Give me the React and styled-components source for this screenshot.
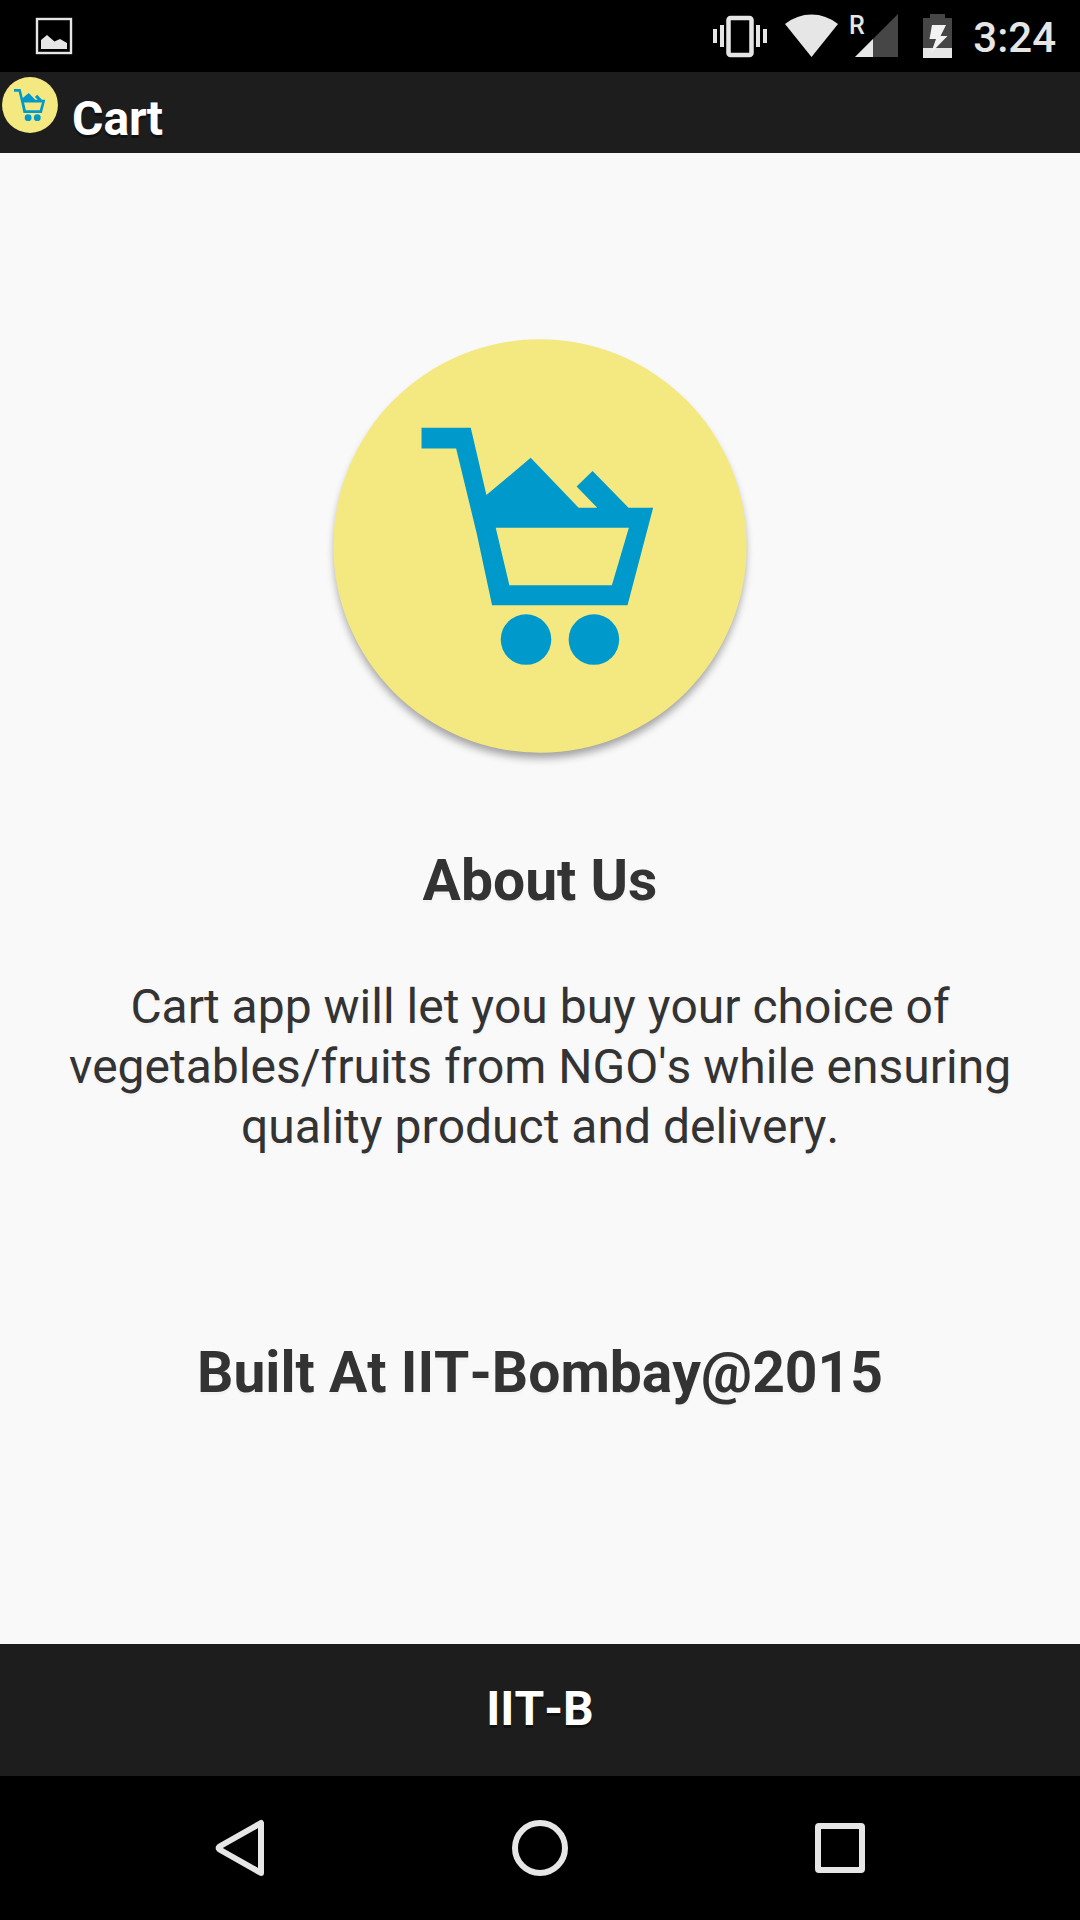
import React from "react";
import styled, { createGlobalStyle } from "styled-components";

const GlobalStyle = createGlobalStyle`
  *, *::before, *::after { box-sizing: border-box; }
  body {
    margin: 0;
    background: #f9f9f9;
    font-family: Roboto, "Noto Sans", sans-serif;
    font-kerning: none;
  }
  svg { display: block; overflow: visible; }
`;

const Screen = styled.div`
  display: flex;
  flex-direction: column;
  min-height: 100vh;
`;

const StatusBar = styled.div`
  display: flex;
  align-items: center;
  justify-content: space-between;
  height: 72px;
  padding: 0 24px 0 36px;
  background: #000;
  color: #e6e6e6;
`;

const StatusIcons = styled.div`
  display: flex;
  align-items: center;
`;

const StatusIcon = styled.svg`
  flex: none;
  width: ${(p) => p.$width}px;
  height: 44px;
  margin-right: ${(p) => p.$gap}px;
`;

const Clock = styled.time`
  font-size: 42px;
  line-height: 48px;
  font-weight: 500;
  padding-top: 4px;
`;

const Header = styled.header`
  display: flex;
  align-items: flex-start;
  gap: 14px;
  padding: 5px 2px 4px;
  background: #1d1d1d;
`;

const BarTitle = styled.h1`
  margin: 0;
  padding-top: ${(p) => p.$drop || 0}px;
  font-size: 48px;
  line-height: 60px;
  font-weight: 700;
  color: #fff;
  text-shadow: 0 3px 0 #111;
`;

const Content = styled.main`
  flex: 1;
  display: flex;
  flex-direction: column;
  align-items: center;
  padding: 186px 48px 48px;
  color: #333;
  text-align: center;
  text-shadow: 0 3px 0 #f3f3f3;
`;

const Heading = styled.h2`
  margin: ${(p) => p.$space}px 0 0;
  font-size: 57px;
  line-height: 70px;
  font-weight: 700;
`;

const Blurb = styled.p`
  margin: 61px 0 0;
  font-size: 48px;
  line-height: 60px;
`;

const Footer = styled.footer`
  display: flex;
  justify-content: center;
  padding: 35px 36px 37px;
  background: #1d1d1d;
`;

const NavBar = styled.nav`
  display: flex;
  justify-content: center;
  height: 144px;
  background: #000;
`;

const NavButton = styled.button`
  flex: 0 1 300px;
  display: flex;
  align-items: center;
  justify-content: center;
  padding: 0;
  border: 0;
  background: none;
  color: #e6e6e6;
  cursor: pointer;
`;

function CartLogo({ size, shadow }) {
  return (
    <svg width={size} height={size} viewBox="68 55 1244 1244" role="img" aria-label="Cart logo">
      {shadow && (
        <>
          <defs>
            <filter id="logo-shadow" x="-10%" y="-10%" width="120%" height="120%">
              <feGaussianBlur stdDeviation="13" />
            </filter>
          </defs>
          <circle cx="690" cy="697" r="617" fill="#000" opacity="0.36" filter="url(#logo-shadow)" />
        </>
      )}
      <circle cx="690" cy="677" r="621" fill="#f4e981" />
      <g fill="#0099cc">
        <path
          fillRule="evenodd"
          d="M334 322H482L529 524L662 412L806 562H862L800 498L848 452L956 562H1030L953 855H546L500 640L438 384H334ZM557 622L598 795H906L957 622Z"
        />
        <circle cx="648" cy="958" r="76" />
        <circle cx="852" cy="958" r="76" />
      </g>
    </svg>
  );
}

export default function App() {
  return (
    <Screen>
      <GlobalStyle />
      <StatusBar>
        <svg width="36" height="36" viewBox="0 0 36 36" role="img" aria-label="Screenshot saved">
          <rect x="1" y="1" width="34" height="34" fill="none" stroke="#e6e6e6" strokeWidth="2.4" />
          <path d="M5 31V22L11 17L18.500 23.500L24 21L31 25V31Z" fill="#e6e6e6" />
        </svg>
        <StatusIcons>
          <StatusIcon $width={54} $gap={18} viewBox="0 0 54 44" role="img" aria-label="Vibrate">
            <rect x="15.500" y="4" width="23" height="37" rx="2" fill="none" stroke="#e6e6e6" strokeWidth="4.500" />
            <path d="M0 15h4v14H0zM7 11h4v22H7zM43 11h4v22h-4zM50 15h4v14h-4z" fill="#e6e6e6" />
          </StatusIcon>
          <StatusIcon $width={53} $gap={14} viewBox="0 0 53 44" role="img" aria-label="Wi-Fi">
            <path d="M0 10Q12 0.500 26.500 0.500T53 10L26.500 43Z" fill="#e6e6e6" />
          </StatusIcon>
          <StatusIcon $width={46} $gap={25} viewBox="0 0 46 44" role="img" aria-label="Mobile signal, roaming">
            <path d="M46 0V43H3Z" fill="#464646" />
            <path d="M21 25V43H3Z" fill="#e6e6e6" />
            <text x="-3" y="20" fontSize="25" fontWeight="500" fill="#e6e6e6">R</text>
          </StatusIcon>
          <StatusIcon $width={29} $gap={21} viewBox="0 0 29 44" role="img" aria-label="Battery charging">
            <path d="M7 0H22V4H29V44H0V4H7Z" fill="#464646" />
            <path d="M0 34H29V44H0Z" fill="#e6e6e6" />
            <path d="M9 11H23L17.500 22H24.500L8 39L13 25H6.500Z" fill="#f2f2f2" />
          </StatusIcon>
          <Clock>3:24</Clock>
        </StatusIcons>
      </StatusBar>

      <Header>
        <CartLogo size={56} />
        <BarTitle $drop={12}>Cart</BarTitle>
      </Header>

      <Content>
        <CartLogo size={414} shadow />
        <Heading $space={93}>About Us</Heading>
        <Blurb>
          Cart app will let you buy your choice of vegetables/fruits from NGO's while ensuring quality product and
          delivery.
        </Blurb>
        <Heading $space={181}>Built At IIT-Bombay@2015</Heading>
      </Content>

      <Footer>
        <BarTitle as="p">IIT-B</BarTitle>
      </Footer>

      <NavBar aria-label="System navigation">
        <NavButton aria-label="Back">
          <svg width="56" height="56" viewBox="0 0 56 56" fill="none" stroke="currentColor" strokeWidth="6">
            <path d="M49 3V53L7.500 29.500Q6 28 7.500 26.500Z" strokeLinejoin="round" />
          </svg>
        </NavButton>
        <NavButton aria-label="Home">
          <svg width="56" height="56" viewBox="0 0 56 56" fill="none" stroke="currentColor" strokeWidth="6">
            <circle cx="28" cy="28" r="25" />
          </svg>
        </NavButton>
        <NavButton aria-label="Recent apps">
          <svg width="56" height="56" viewBox="0 0 56 56" fill="none" stroke="currentColor" strokeWidth="6">
            <rect x="6" y="6" width="44" height="44" rx="1" />
          </svg>
        </NavButton>
      </NavBar>
    </Screen>
  );
}
